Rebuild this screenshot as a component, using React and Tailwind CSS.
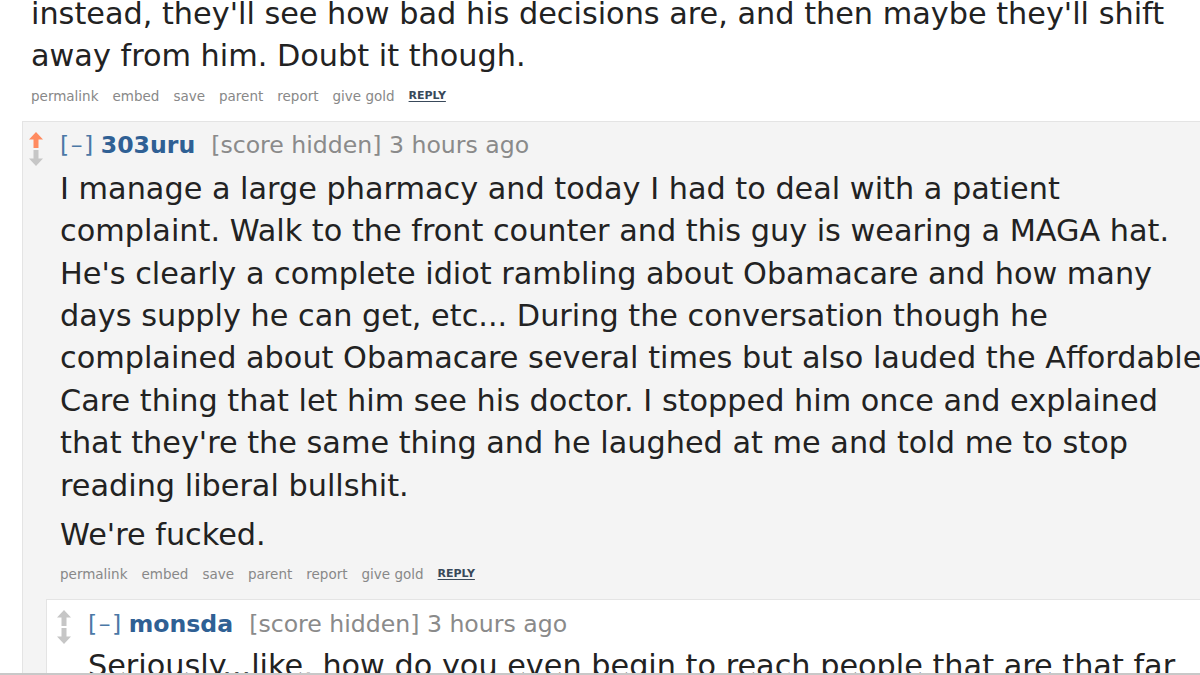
import React from 'react'

function Arrow({ up, color }) {
  return (
    <svg width="14" height="16" viewBox="0 0 14 16" className="block">
      {up ? (
        <path d="M7 0 L14 7.5 L9.5 7.5 L9.5 16 L4.5 16 L4.5 7.5 L0 7.5 Z" fill={color} />
      ) : (
        <path d="M7 16 L14 8.5 L9.5 8.5 L9.5 0 L4.5 0 L4.5 8.5 L0 8.5 Z" fill={color} />
      )}
    </svg>
  )
}

function Actions({ className = '' }) {
  const items = ['permalink', 'embed', 'save', 'parent', 'report', 'give gold']
  return (
    <div className={'flex items-center gap-[14px] h-[20px] text-[13.5px] text-[#888] ' + className}>
      {items.map(i => (
        <span key={i} className="whitespace-nowrap">{i}</span>
      ))}
      <span className="text-[11px] font-bold text-[#39495a] underline underline-offset-2">REPLY</span>
    </div>
  )
}

function Tagline({ user }) {
  return (
    <div className="flex items-center h-[30px] text-[23.6px] whitespace-nowrap">
      <span className="text-[#4b78a6] tracking-[1.5px]">[–]</span>
      <span className="ml-[6px] font-bold text-[#2f6094]">{user}</span>
      <span className="ml-[16px] text-[#8a8a8a]">[score hidden] 3 hours ago</span>
    </div>
  )
}

export default function App() {
  const body = [
    'I manage a large pharmacy and today I had to deal with a patient',
    'complaint. Walk to the front counter and this guy is wearing a MAGA hat.',
    "He's clearly a complete idiot rambling about Obamacare and how many",
    'days supply he can get, etc... During the conversation though he',
    'complained about Obamacare several times but also lauded the Affordable',
    'Care thing that let him see his doctor. I stopped him once and explained',
    "that they're the same thing and he laughed at me and told me to stop",
    'reading liberal bullshit.'
  ]

  return (
    <div className="relative w-[1200px] h-[675px] overflow-hidden bg-white text-[#222] font-['DejaVu_Sans','Verdana',sans-serif]">
      {/* tail of the previous comment */}
      <div className="pl-[31px] -mt-[7px]">
        <p className="text-[30.3px] leading-[42.4px] whitespace-nowrap">
          instead, they'll see how bad his decisions are, and then maybe they'll shift<br />
          away from him. Doubt it though.
        </p>
        <Actions className="mt-[8px]" />
      </div>

      {/* comment by 303uru */}
      <div className="ml-[22px] mt-[15px] w-[1220px] border border-[#e4e4e4] bg-[#f4f4f4] pt-[9px]">
        <div className="flex pl-[6px]">
          <div className="w-[31px] flex flex-col items-start gap-[2px] pt-[1px]">
            <Arrow up color="#ff8b60" />
            <Arrow color="#c6c6c6" />
          </div>
          <div>
            <Tagline user="303uru" />
            <div className="mt-[7px] text-[30.3px] leading-[42.4px] whitespace-nowrap">
              <p>
                {body.map((l, i) => (
                  <React.Fragment key={i}>
                    {l}
                    {i < body.length - 1 && <br />}
                  </React.Fragment>
                ))}
              </p>
              <p className="mt-[7px]">We're fucked.</p>
            </div>
            <Actions className="mt-[8px]" />
          </div>
        </div>

        {/* reply by monsda */}
        <div className="ml-[23px] mt-[15px] border border-[#e4e4e4] bg-white pt-[9px] pl-[10px] pb-[20px]">
          <div className="flex">
            <div className="w-[31px] flex flex-col items-start gap-[2px] pt-[1px]">
              <Arrow up color="#c6c6c6" />
              <Arrow color="#c6c6c6" />
            </div>
            <div>
              <Tagline user="monsda" />
              <p className="mt-[6px] text-[30.3px] leading-[42.4px] whitespace-nowrap">
                Seriously...like, how do you even begin to reach people that are that far
              </p>
            </div>
          </div>
        </div>
      </div>

      <div className="absolute left-0 right-0 bottom-0 h-[2px] bg-[#c8c8c8]" />
    </div>
  )
}
